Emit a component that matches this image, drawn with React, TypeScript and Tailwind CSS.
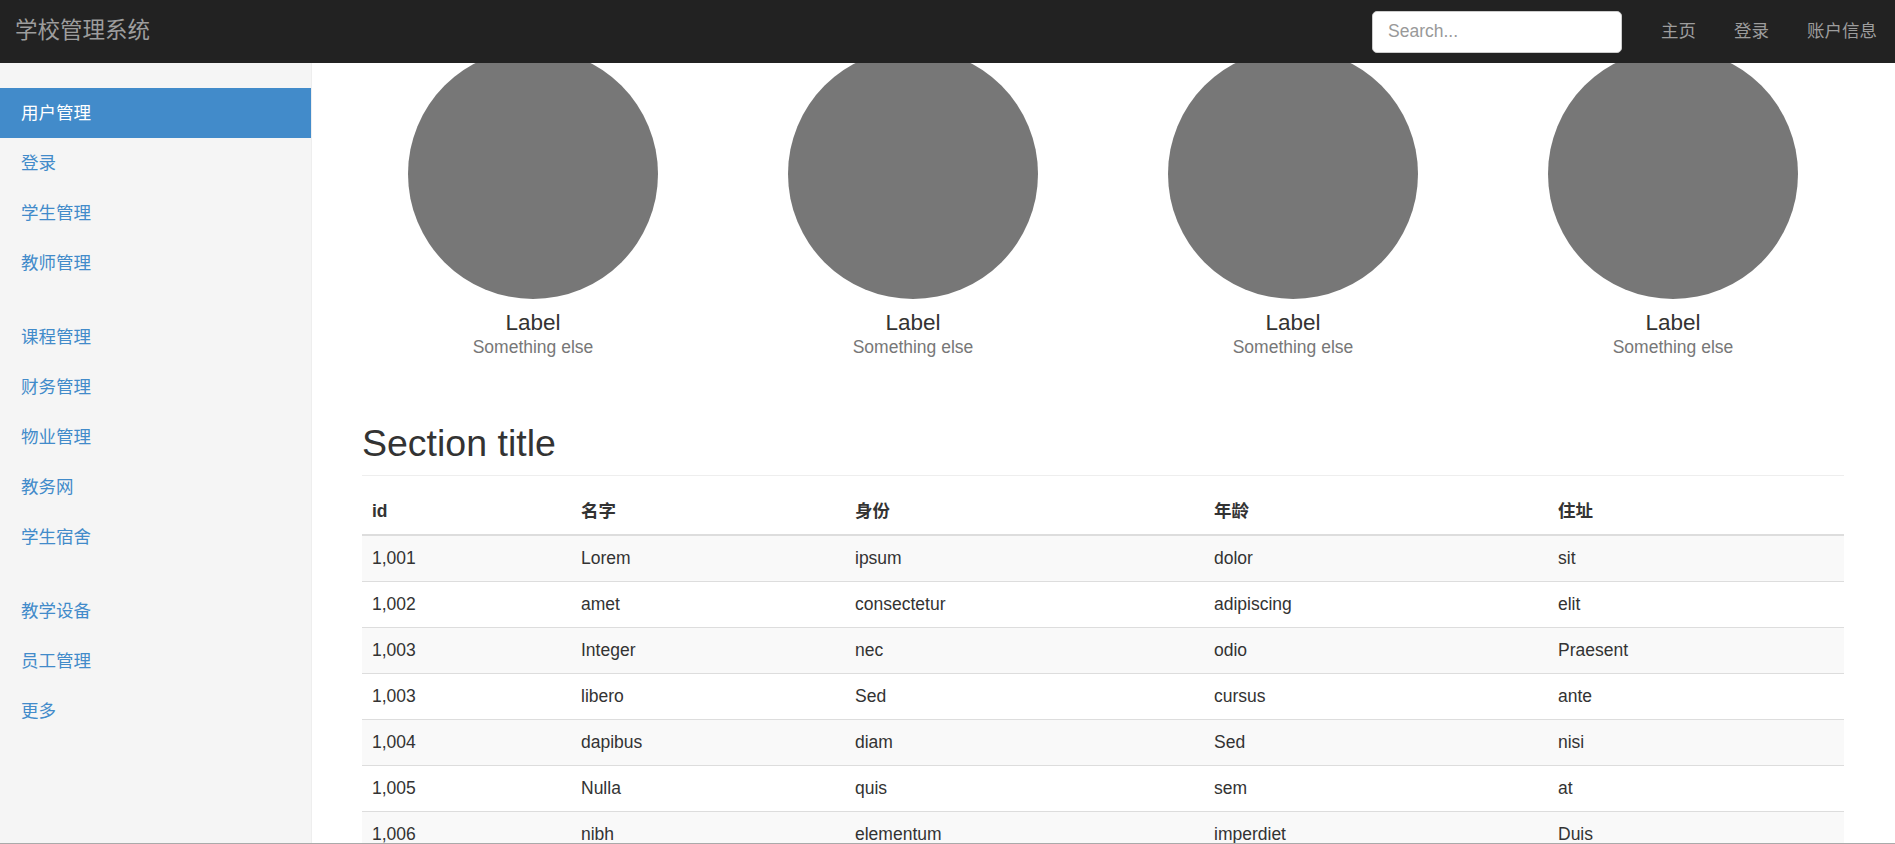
import React from 'react';

const font = 'font-["Liberation_Sans","Noto_Sans_CJK_SC",sans-serif]';

interface Row {
  id: string;
  name: string;
  role: string;
  age: string;
  addr: string;
}

const rows: Row[] = [
  { id: '1,001', name: 'Lorem', role: 'ipsum', age: 'dolor', addr: 'sit' },
  { id: '1,002', name: 'amet', role: 'consectetur', age: 'adipiscing', addr: 'elit' },
  { id: '1,003', name: 'Integer', role: 'nec', age: 'odio', addr: 'Praesent' },
  { id: '1,003', name: 'libero', role: 'Sed', age: 'cursus', addr: 'ante' },
  { id: '1,004', name: 'dapibus', role: 'diam', age: 'Sed', addr: 'nisi' },
  { id: '1,005', name: 'Nulla', role: 'quis', age: 'sem', addr: 'at' },
  { id: '1,006', name: 'nibh', role: 'elementum', age: 'imperdiet', addr: 'Duis' },
  { id: '1,007', name: 'sagittis', role: 'ipsum', age: 'Praesent', addr: 'mauris' },
  { id: '1,008', name: 'Fusce', role: 'nec', age: 'tellus', addr: 'sed' },
  { id: '1,009', name: 'augue', role: 'semper', age: 'porta', addr: 'Mauris' },
];

const navGroups: string[][] = [
  ['用户管理', '登录', '学生管理', '教师管理'],
  ['课程管理', '财务管理', '物业管理', '教务网', '学生宿舍'],
  ['教学设备', '员工管理', '更多'],
];

const Navbar: React.FC = () => (
  <div className="fixed top-0 inset-x-0 z-20 h-[63px] bg-[#222] flex items-center">
    <span className="pl-[15px] text-[22.5px] leading-none text-[#9d9d9d]">学校管理系统</span>
    <div className="ml-auto flex items-center pr-[18px]">
      <input
        type="text"
        placeholder="Search..."
        className={`w-[250px] h-[42px] rounded-[5px] bg-white border border-[#ccc] px-[15px] text-[17.5px] text-[#555] placeholder:text-[#999] outline-none ${font}`}
      />
      <div className="ml-[39px] flex items-center gap-[38px] text-[17.5px] text-[#9d9d9d]">
        <a>主页</a>
        <a>登录</a>
        <a>账户信息</a>
      </div>
    </div>
  </div>
);

const Sidebar: React.FC = () => (
  <div className="fixed top-[63px] bottom-0 left-0 w-[312px] bg-[#f5f5f5] border-r border-[#eee] pt-[25px]">
    {navGroups.map((group, gi) => (
      <ul key={gi} className="mb-[24px]">
        {group.map((item, i) => {
          const active = gi === 0 && i === 0;
          return (
            <li
              key={item}
              className={`h-[50px] flex items-center pl-[21px] text-[17.5px] ${
                active ? 'bg-[#428bca] text-white' : 'text-[#428bca]'
              }`}
            >
              {item}
            </li>
          );
        })}
      </ul>
    ))}
  </div>
);

const Placeholders: React.FC = () => (
  <div className="-mx-[19px] grid grid-cols-4">
    {[0, 1, 2, 3].map((i) => (
      <div key={i} className="flex flex-col items-center">
        <div className="w-[250px] h-[250px] rounded-full bg-[#777]" />
        <h4 className="mt-[11px] text-[22.5px] leading-[25px] text-[#333]">Label</h4>
        <span className="text-[17.5px] leading-[25px] text-[#777]">Something else</span>
      </div>
    ))}
  </div>
);

export default function App() {
  return (
    <div className={`min-h-screen bg-white text-[#333] ${font}`}>
      <Navbar />
      <Sidebar />
      <div className="ml-[312px] pl-[50px] pr-[51px] pt-[49px] pb-10">
        <Placeholders />
        <h2 className="mt-[63px] pb-[11px] border-b border-[#eee] text-[37.5px] leading-[41px] text-[#333]">
          Section title
        </h2>
        <table className="mt-[13px] w-full border-collapse text-[17.5px] leading-[25px]">
          <thead>
            <tr>
              <th className="w-[209px] p-[10px] text-left font-bold border-b-2 border-[#ddd]">id</th>
              <th className="w-[274px] p-[10px] text-left font-bold border-b-2 border-[#ddd]">名字</th>
              <th className="w-[359px] p-[10px] text-left font-bold border-b-2 border-[#ddd]">身份</th>
              <th className="w-[344px] p-[10px] text-left font-bold border-b-2 border-[#ddd]">年龄</th>
              <th className="p-[10px] text-left font-bold border-b-2 border-[#ddd]">住址</th>
            </tr>
          </thead>
          <tbody>
            {rows.map((r, i) => (
              <tr key={i} className={i % 2 === 0 ? 'bg-[#f9f9f9]' : ''}>
                <td className="p-[10px] border-t border-[#ddd]">{r.id}</td>
                <td className="p-[10px] border-t border-[#ddd]">{r.name}</td>
                <td className="p-[10px] border-t border-[#ddd]">{r.role}</td>
                <td className="p-[10px] border-t border-[#ddd]">{r.age}</td>
                <td className="p-[10px] border-t border-[#ddd]">{r.addr}</td>
              </tr>
            ))}
          </tbody>
        </table>
      </div>
      <div className="fixed bottom-0 inset-x-0 h-px bg-[#aaa] z-30" />
    </div>
  );
}
